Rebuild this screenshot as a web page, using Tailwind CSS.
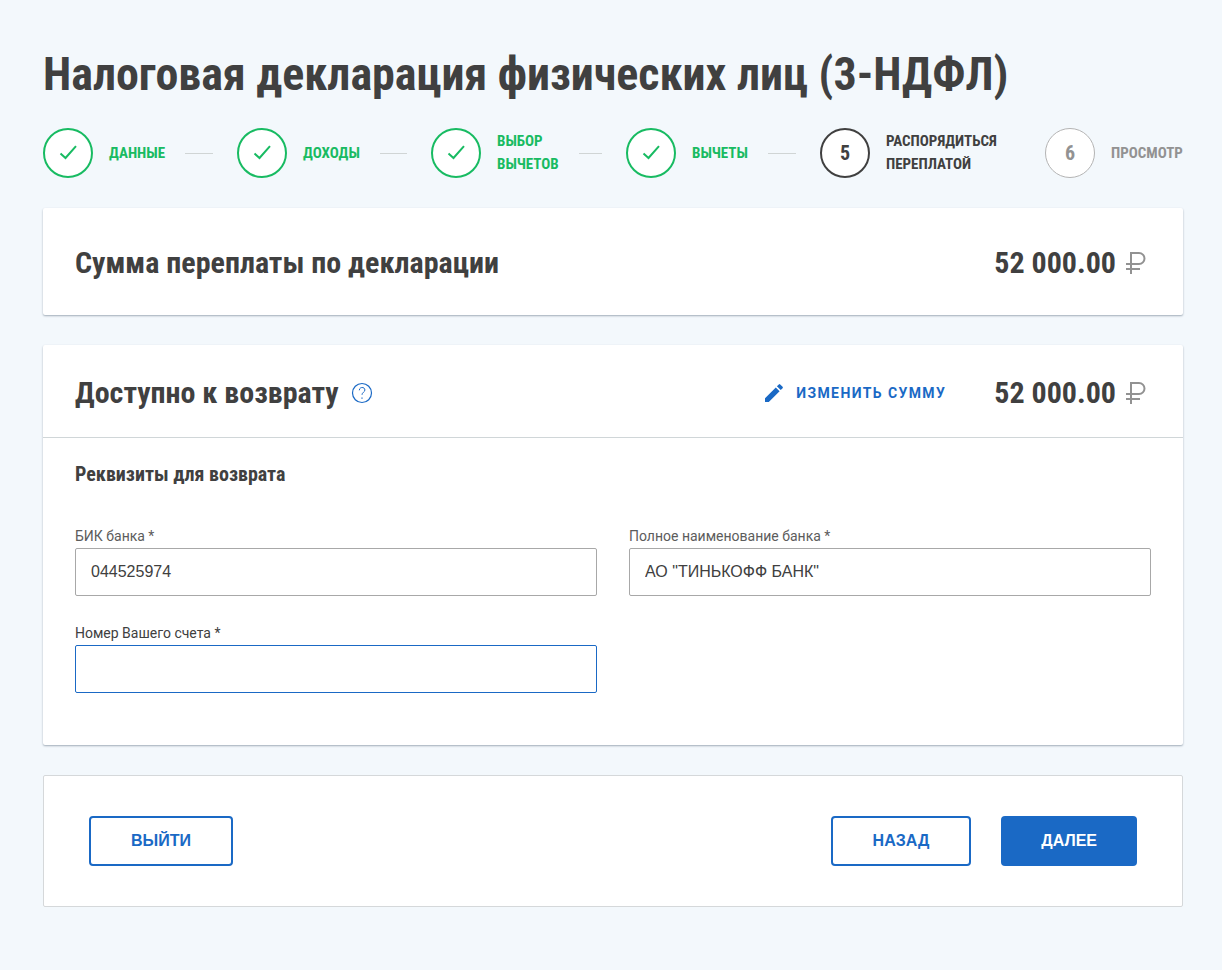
<!DOCTYPE html>
<html lang="ru">

<head>
    <meta charset="utf-8">
    <meta name="viewport" content="width=device-width, initial-scale=1">
    <title>Налоговая декларация физических лиц (3-НДФЛ)</title>
    <script src="https://cdn.jsdelivr.net/npm/@tailwindcss/browser@4"></script>
</head>

<body class="min-h-screen bg-[#f3f8fc] text-[#404040] font-['Roboto','Liberation_Sans',sans-serif]">
    <main class="pl-[43px] pr-[39px] pt-9 pb-16">
        <h1 class="text-[46px] leading-[76px] font-bold font-['Roboto_Condensed','Roboto',sans-serif]">Налоговая декларация физических лиц (3-НДФЛ)</h1>

        <ol class="mt-4 grid grid-cols-[194fr_194fr_195fr_194fr_225fr_138fr] items-center text-[15px] leading-[23px] font-bold uppercase whitespace-nowrap font-['Roboto_Condensed','Roboto',sans-serif]">
            <li class="flex items-center text-[#18bb62]">
                <span class="flex size-[50px] shrink-0 items-center justify-center rounded-full border-2 border-current bg-white">
                    <svg class="size-5" viewBox="0 0 20 20" fill="none" stroke="currentColor" stroke-width="2"><path d="M2.500 10.500l5 4.500L18 3.200"/></svg>
                </span>
                <span class="ml-4">Данные</span>
                <span class="ml-5 mr-6 h-px flex-1 bg-[#d0d5d5]"></span>
            </li>
            <li class="flex items-center text-[#18bb62]">
                <span class="flex size-[50px] shrink-0 items-center justify-center rounded-full border-2 border-current bg-white">
                    <svg class="size-5" viewBox="0 0 20 20" fill="none" stroke="currentColor" stroke-width="2"><path d="M2.500 10.500l5 4.500L18 3.200"/></svg>
                </span>
                <span class="ml-4">Доходы</span>
                <span class="ml-5 mr-6 h-px flex-1 bg-[#d0d5d5]"></span>
            </li>
            <li class="flex items-center text-[#18bb62]">
                <span class="flex size-[50px] shrink-0 items-center justify-center rounded-full border-2 border-current bg-white">
                    <svg class="size-5" viewBox="0 0 20 20" fill="none" stroke="currentColor" stroke-width="2"><path d="M2.500 10.500l5 4.500L18 3.200"/></svg>
                </span>
                <span class="ml-4">Выбор<br>вычетов</span>
                <span class="ml-5 mr-6 h-px flex-1 bg-[#d0d5d5]"></span>
            </li>
            <li class="flex items-center text-[#18bb62]">
                <span class="flex size-[50px] shrink-0 items-center justify-center rounded-full border-2 border-current bg-white">
                    <svg class="size-5" viewBox="0 0 20 20" fill="none" stroke="currentColor" stroke-width="2"><path d="M2.500 10.500l5 4.500L18 3.200"/></svg>
                </span>
                <span class="ml-4">Вычеты</span>
                <span class="ml-5 mr-6 h-px flex-1 bg-[#d0d5d5]"></span>
            </li>
            <li class="flex items-center" aria-current="step">
                <span class="flex size-[50px] shrink-0 items-center justify-center rounded-full border-2 border-current bg-white text-xl">5</span>
                <span class="ml-4">Распорядиться<br>переплатой</span>
            </li>
            <li class="flex items-center text-[#929292]">
                <span class="flex size-[50px] shrink-0 items-center justify-center rounded-full border border-[#b4b4b4] bg-white text-xl">6</span>
                <span class="ml-4">Просмотр</span>
            </li>
        </ol>

        <section class="mt-[30px] flex items-center justify-between rounded-xs bg-white px-8 pt-[34px] pb-8 shadow-[0_1px_2px_rgba(60,80,100,0.45)]">
            <h2 class="text-3xl leading-[41px] font-bold font-['Roboto_Condensed','Roboto',sans-serif]">Сумма переплаты по декларации</h2>
            <p class="mr-[5px] flex items-center text-3xl leading-[41px] font-bold font-['Roboto_Condensed','Roboto',sans-serif]">52 000.00
                <svg class="ml-[10px] h-6 w-5" viewBox="0 0 20 24" fill="none" stroke="#929292" stroke-width="2"><path d="M5 23V2h8a5.500 5.500 0 0 1 0 11H0M0 18h14"/></svg>
            </p>
        </section>

        <section class="mt-[30px] rounded-xs bg-white shadow-[0_1px_2px_rgba(60,80,100,0.45)]">
            <div class="flex items-center border-b border-[#d0d6d8] px-8 pt-[27px] pb-6">
                <h2 class="text-3xl leading-[41px] font-bold font-['Roboto_Condensed','Roboto',sans-serif]">Доступно к возврату</h2>
                <button type="button" class="ml-3 text-[#1a69c5]" aria-label="Справка">
                    <svg class="size-[22px]" viewBox="0 0 22 22" fill="none" stroke="currentColor"><circle cx="11" cy="11" r="9.500" stroke-width="1.200"/><path d="M8.300 8.300c0-3.700 5.600-3.700 5.600-.3 0 2.200-2.900 2.300-2.900 4.800M11 15.400v1.500"/></svg>
                </button>
                <button type="button" class="mr-12 ml-auto flex items-center gap-3 text-sm font-bold tracking-widest uppercase text-[#1a69c5]">
                    <svg class="size-5" viewBox="0 0 20 20" fill="currentColor"><path d="M1 15.200V19h3.800L15.600 8.200l-3.800-3.800zM18.600 5.200a1 1 0 0 0 0-1.400l-2.400-2.400a1 1 0 0 0-1.400 0l-1.900 1.900 3.800 3.800z"/></svg>
                    Изменить сумму
                </button>
                <p class="mr-[5px] flex items-center text-3xl leading-[41px] font-bold font-['Roboto_Condensed','Roboto',sans-serif]">52 000.00
                    <svg class="ml-[10px] h-6 w-5" viewBox="0 0 20 24" fill="none" stroke="#929292" stroke-width="2"><path d="M5 23V2h8a5.500 5.500 0 0 1 0 11H0M0 18h14"/></svg>
                </p>
            </div>

            <form class="px-8 pt-5 pb-[52px]">
                <h3 class="text-xl leading-8 font-bold font-['Roboto_Condensed','Roboto',sans-serif]">Реквизиты для возврата</h3>
                <div class="mt-9 grid grid-cols-2 gap-x-8 gap-y-[27px] text-base">
                    <div>
                        <label for="bik" class="mb-0.5 block text-sm text-[#5c5c5c]">БИК банка *</label>
                        <input id="bik" type="text" value="044525974" class="h-12 w-full rounded-xs border border-[#a8a8a8] px-[15px] font-['Liberation_Sans',sans-serif]">
                    </div>
                    <div>
                        <label for="bank" class="mb-0.5 block text-sm text-[#5c5c5c]">Полное наименование банка *</label>
                        <input id="bank" type="text" value='АО "ТИНЬКОФФ БАНК"' class="h-12 w-full rounded-xs border border-[#a8a8a8] px-[15px] font-['Liberation_Sans',sans-serif]">
                    </div>
                    <div>
                        <label for="account" class="mb-0.5 block text-sm">Номер Вашего счета *</label>
                        <input id="account" type="text" class="h-12 w-full rounded-xs border border-[#1a69c5] px-[15px] font-['Liberation_Sans',sans-serif]">
                    </div>
                </div>
            </form>
        </section>

        <div class="mt-[30px] flex gap-[30px] rounded-xs border border-[#d5d8da] bg-white px-[45px] py-10 font-bold font-['Liberation_Sans',sans-serif]">
            <button type="button" class="mr-auto h-[50px] rounded-sm border-2 border-[#1a69c5] px-10 uppercase text-[#1a69c5]">Выйти</button>
            <button type="button" class="h-[50px] rounded-sm border-2 border-[#1a69c5] px-10 uppercase text-[#1a69c5]">Назад</button>
            <button type="button" class="h-[50px] rounded-sm bg-[#1a69c5] px-10 uppercase text-white">Далее</button>
        </div>
    </main>
</body>

</html>
